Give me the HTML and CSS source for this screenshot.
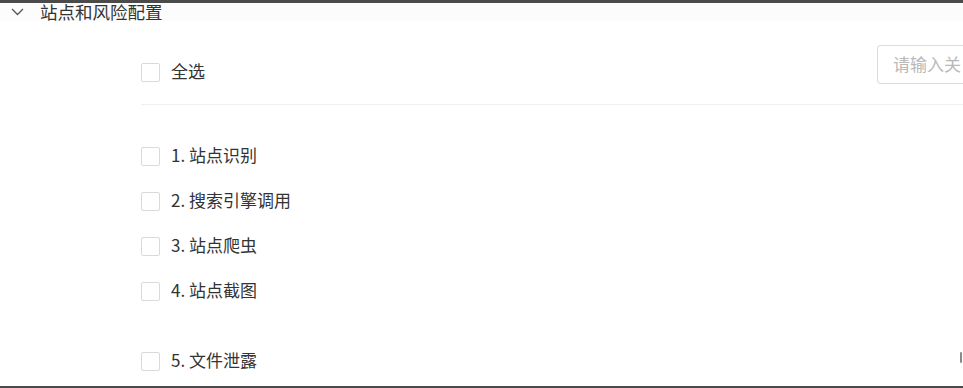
FILE: index.html
```html
<!DOCTYPE html>
<html lang="zh-CN">
<head>
<meta charset="utf-8">
<title>站点和风险配置</title>
<link rel="stylesheet" href="styles.css">
</head>
<body>
<div class="frame">
  <div class="topbar"></div>
  <main class="main">
    <div class="panel-header">
      <svg class="chevron" width="13" height="8" viewBox="0 0 13 8"><path d="M1 1 L6.5 6.5 L12 1" fill="none" stroke="#555" stroke-width="1.3"/></svg>
      <span class="panel-title">站点和风险配置</span>
    </div>
    <div class="panel-body">
      <div class="toolbar">
        <label class="check all"><span class="box"></span><span class="label">全选</span></label>
        <div class="search"><span class="placeholder">请输入关</span></div>
      </div>
      <div class="group">
        <label class="check item"><span class="box"></span><span class="label">1. 站点识别</span></label>
        <label class="check item"><span class="box"></span><span class="label">2. 搜索引擎调用</span></label>
        <label class="check item"><span class="box"></span><span class="label">3. 站点爬虫</span></label>
        <label class="check item"><span class="box"></span><span class="label">4. 站点截图</span></label>
      </div>
      <div class="group second">
        <div class="row-split">
          <label class="check item"><span class="box"></span><span class="label">5. 文件泄露</span></label>
          <span class="edge-mark"></span>
        </div>
      </div>
    </div>
  </main>
  <div class="bottombar"></div>
</div>
</body>
</html>
```

FILE: styles.css
```css
html, body {
  margin: 0;
  padding: 0;
  background: #ffffff;
}
body {
  width: 963px;
  height: 388px;
  overflow: hidden;
  font-family: "Noto Sans CJK SC", "Noto Sans", sans-serif;
  color: #333333;
}
.frame {
  height: 388px;
  display: flex;
  flex-direction: column;
}
.topbar {
  height: 3px;
  background: #4b4b4b;
  flex-shrink: 0;
}
.main {
  flex: 1;
  min-height: 0;
}
.bottombar {
  height: 2px;
  background: #4b4b4b;
  flex-shrink: 0;
}
.panel-header {
  height: 18px;
  display: flex;
  align-items: center;
  padding-left: 11px;
  background: #fcfcfc;
}
.chevron {
  display: block;
}
.panel-title {
  margin-left: 16px;
  font-size: 17.5px;
  line-height: 18px;
  color: #333333;
}
.panel-body {
  padding-left: 141px;
}
.toolbar {
  display: flex;
  align-items: flex-start;
  margin-top: 24px;
  padding-bottom: 20px;
  border-bottom: 1px solid #f0f0f0;
}
.check {
  display: flex;
  align-items: center;
}
.box {
  width: 17px;
  height: 17px;
  border: 1px solid #d9d9d9;
  border-radius: 2px;
  background: #ffffff;
  flex-shrink: 0;
}
.label {
  margin-left: 11px;
  font-size: 17px;
  line-height: 20px;
  padding-bottom: 3px;
  color: #333333;
  white-space: nowrap;
}
.check.all {
  flex: 1;
  margin-top: 16px;
}
.search {
  width: 70px;
  height: 37px;
  border: 1px solid #dcdcdc;
  border-right: none;
  border-radius: 4px 0 0 4px;
  display: flex;
  align-items: center;
  padding-left: 15px;
  box-sizing: content-box;
  flex-shrink: 0;
  overflow: hidden;
}
.placeholder {
  font-size: 17px;
  line-height: 20px;
  padding-bottom: 2px;
  color: #b8b8b8;
  white-space: nowrap;
}
.group {
  margin-top: 29px;
}
.check.item {
  height: 45px;
}
.group.second {
  margin-top: 25px;
}
.row-split {
  display: flex;
  align-items: center;
  justify-content: space-between;
}
.edge-mark {
  width: 2px;
  height: 11px;
  background: #8a8a8a;
  border-radius: 1px;
  margin-right: 1px;
  margin-top: -8px;
}
```
